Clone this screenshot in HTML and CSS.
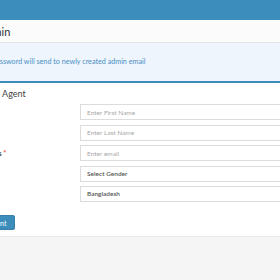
FILE: index.html
```html
<!DOCTYPE html>
<html>
<head>
    <meta charset="UTF-8">
    <title>Agents</title>
    <link rel="stylesheet" href="styles.css">
</head>
<body>
    <header class="topbar"></header>
    <div class="page-title">Admin</div>
    <div class="callout">Password will send to newly created admin email</div>

    <div class="box">
        <h3 class="box-title">Add Agent</h3>
        <form class="agent-form">
            <div class="row">
                <label>First Name</label>
                <input type="text" placeholder="Enter First Name">
            </div>
            <div class="row">
                <label>Last Name</label>
                <input type="text" placeholder="Enter Last Name">
            </div>
            <div class="row">
                <label>Email Address <span class="req">*</span></label>
                <input type="text" placeholder="Enter email">
            </div>
            <div class="row">
                <label>Gender</label>
                <div class="select">Select Gender</div>
            </div>
            <div class="row">
                <label>Country</label>
                <div class="select">Bangladesh</div>
            </div>
        </form>
        <div class="box-footer">
            <button class="btn">Add Agent</button>
        </div>
    </div>
</body>
</html>
```

FILE: styles.css
```css
body {
    margin: 0;
    font-family: Lato, "Open Sans", sans-serif;
    background-color: #f5f5f5;
    color: #444;
    overflow: hidden;
}

.topbar {
    height: 20px;
    background-color: #3c8dbc;
}

.page-title {
    height: 22px;
    line-height: 24px;
    margin-left: -21px;
    font-size: 11px;
    color: #333;
    background-color: #fbfbfb;
    border-bottom: 1px solid #e2e2e2;
}

.callout {
    height: 38px;
    line-height: 37px;
    margin-left: -8px;
    font-size: 7.2px;
    color: #4b8fc4;
    background-color: #eef5fc;
    border-bottom: 2px solid #3c8dbc;
}

.box {
    background-color: #fff;
}

.box-title {
    margin: 0 0 0 -16px;
    padding-top: 5px;
    height: 15px;
    font-size: 9px;
    font-weight: normal;
    color: #444;
}

.agent-form {
    display: flex;
    flex-direction: column;
    gap: 4.5px;
    padding-top: 1px;
}

.row {
    display: flex;
    align-items: center;
    margin-left: -42px;
}

.row label {
    flex: none;
    width: 122px;
    font-size: 7px;
    font-weight: bold;
    color: #444;
}

.req {
    color: #dd4b39;
}

.row input,
.select {
    flex: none;
    box-sizing: border-box;
    width: 240px;
    height: 16px;
    padding: 0 6px;
    border: 1px solid #dcdcdc;
    font-family: inherit;
    font-size: 6.5px;
    color: #555;
    outline: none;
}

.row input::placeholder {
    color: #a8a8a8;
}

.select {
    line-height: 14px;
    font-size: 6.5px;
    font-weight: 600;
    color: #555;
}

.box-footer {
    margin-top: 13px;
    padding: 0 0 6px;
    border-bottom: 1px solid #ebebeb;
}

.btn {
    display: block;
    margin-left: -35px;
    height: 15px;
    padding: 0 8px;
    font-family: inherit;
    font-size: 7px;
    color: #fff;
    background-color: #3c8dbc;
    border: 1px solid #367fa9;
    border-radius: 2px;
}
```
